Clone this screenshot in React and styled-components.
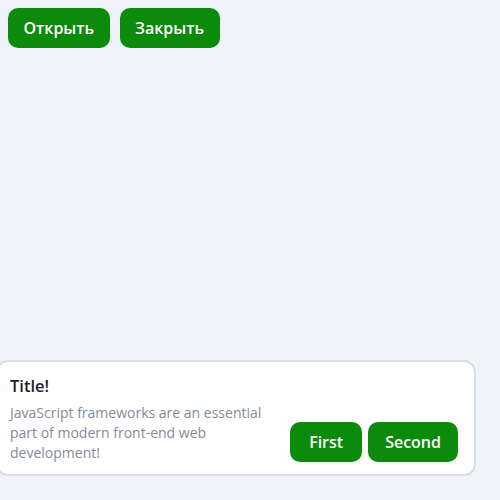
import React from "react";
import styled, { createGlobalStyle } from "styled-components";

const GlobalStyle = createGlobalStyle`
  html, body {
    margin: 0;
    padding: 0;
    height: 100%;
    background-color: #f0f4f8;
    font-family: "Open Sans", "Liberation Sans", sans-serif;
  }
  #root {
    height: 100%;
  }
`;

const Page = styled.div`
  height: 100%;
  display: flex;
  flex-direction: column;
  box-sizing: border-box;
  padding: 8px 0 24px;
`;

const Toolbar = styled.div`
  display: flex;
  gap: 10px;
  padding: 0 8px;
`;

const Button = styled.button`
  height: 40px;
  padding: 0 ${(p) => p.$pad || 16}px;
  border: none;
  border-radius: 10px;
  background-color: #0b8a0b;
  color: #fff;
  font-family: inherit;
  font-size: ${(p) => p.$size || 16}px;
  font-weight: 600;
  cursor: pointer;
`;

const Card = styled.div`
  margin-top: auto;
  margin-left: -4px;
  width: 480px;
  box-sizing: border-box;
  background-color: #fff;
  border: 2px solid #d7dfe6;
  border-radius: 12px;
  display: flex;
  align-items: flex-end;
  padding: 12px 16px 11px 12px;
  gap: 12px;
`;

const Body = styled.div`
  flex: 1;
  min-width: 0;
`;

const Title = styled.div`
  font-size: 16.5px;
  font-weight: 600;
  color: #222;
  line-height: 24px;
  margin-bottom: 5px;
`;

const Text = styled.div`
  font-size: 14px;
  line-height: 20px;
  color: #818c99;
`;

const Actions = styled.div`
  display: flex;
  gap: 6px;
  margin-bottom: 1px;
`;

export default function App() {
  return (
    <>
      <GlobalStyle />
      <Page>
        <Toolbar>
          <Button $pad={15.5}>Открыть</Button>
          <Button $pad={15.5}>Закрыть</Button>
        </Toolbar>
        <Card>
          <Body>
            <Title>Title!</Title>
            <Text>
              JavaScript frameworks are an essential part of modern front-end
              web development!
            </Text>
          </Body>
          <Actions>
            <Button $pad={19}>First</Button>
            <Button $pad={17}>Second</Button>
          </Actions>
        </Card>
      </Page>
    </>
  );
}
